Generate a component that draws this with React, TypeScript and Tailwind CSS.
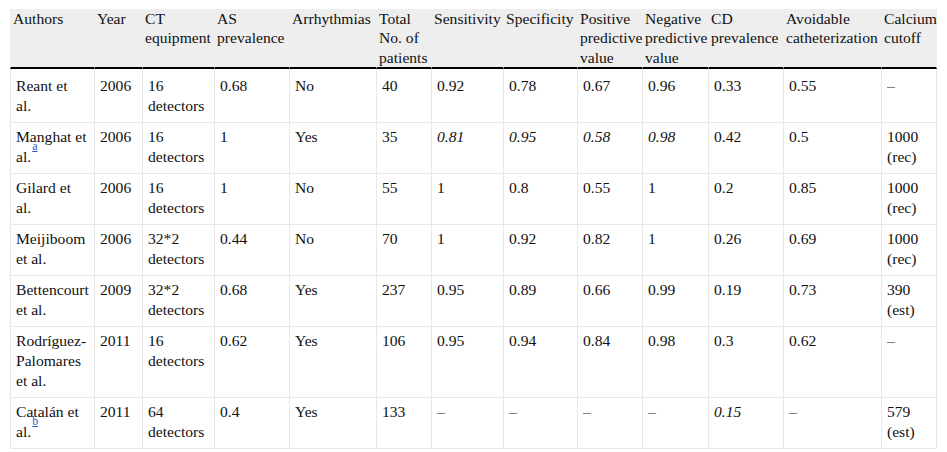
import React from "react";

type Cell = { v: React.ReactNode; i?: boolean };

const widths = [
  "w-[84px]",
  "w-[48px]",
  "w-[72px]",
  "w-[75px]",
  "w-[87px]",
  "w-[55px]",
  "w-[72px]",
  "w-[74px]",
  "w-[65px]",
  "w-[66px]",
  "w-[75px]",
  "w-[98px]",
  "w-[56px]",
];

const headers = [
  "Authors",
  "Year",
  "CT equipment",
  "AS prevalence",
  "Arrhythmias",
  "Total No. of patients",
  "Sensitivity",
  "Specificity",
  "Positive predictive value",
  "Negative predictive value",
  "CD prevalence",
  "Avoidable catheterization",
  "Calcium cutoff",
];

const Sup = ({ c }: { c: string }) => (
  <sup className="ml-[1px] text-[12px] text-[#2b5cc4] underline align-[6px] leading-[0]">{c}</sup>
);

const Lines = ({ l }: { l: React.ReactNode[] }) => (
  <>
    {l.map((x, i) => (
      <span key={i} className="block whitespace-nowrap">
        {x}
      </span>
    ))}
  </>
);

const rows: Cell[][] = [
  [
    { v: <Lines l={["Reant et", "al."]} /> },
    ...["2006", "16 detectors", "0.68", "No", "40", "0.92", "0.78", "0.67", "0.96", "0.33", "0.55", "–"].map((v) => ({ v })),
  ],
  [
    { v: <Lines l={["Manghat et", <>al.<Sup c="a" /></>]} /> },
    { v: "2006" },
    { v: "16 detectors" },
    { v: "1" },
    { v: "Yes" },
    { v: "35" },
    { v: "0.81", i: true },
    { v: "0.95", i: true },
    { v: "0.58", i: true },
    { v: "0.98", i: true },
    { v: "0.42" },
    { v: "0.5" },
    { v: "1000 (rec)" },
  ],
  [
    { v: <Lines l={["Gilard et", "al."]} /> },
    ...["2006", "16 detectors", "1", "No", "55", "1", "0.8", "0.55", "1", "0.2", "0.85", "1000 (rec)"].map((v) => ({ v })),
  ],
  [
    { v: <Lines l={["Meijiboom", "et al."]} /> },
    ...["2006", "32*2 detectors", "0.44", "No", "70", "1", "0.92", "0.82", "1", "0.26", "0.69", "1000 (rec)"].map((v) => ({ v })),
  ],
  [
    { v: <Lines l={["Bettencourt", "et al."]} /> },
    ...["2009", "32*2 detectors", "0.68", "Yes", "237", "0.95", "0.89", "0.66", "0.99", "0.19", "0.73", "390 (est)"].map((v) => ({ v })),
  ],
  [
    { v: <Lines l={["Rodríguez-", "Palomares", "et al."]} /> },
    ...["2011", "16 detectors", "0.62", "Yes", "106", "0.95", "0.94", "0.84", "0.98", "0.3", "0.62", "–"].map((v) => ({ v })),
  ],
  [
    { v: <Lines l={["Catalán et", <>al.<Sup c="b" /></>]} /> },
    { v: "2011" },
    { v: "64 detectors" },
    { v: "0.4" },
    { v: "Yes" },
    { v: "133" },
    { v: "–" },
    { v: "–" },
    { v: "–" },
    { v: "–" },
    { v: "0.15", i: true },
    { v: "–" },
    { v: "579 (est)" },
  ],
];

export default function App() {
  return (
    <div className="w-[947px] h-[452px] bg-white pl-[10px] pt-[9px] overflow-hidden [font-family:'Liberation_Serif','Times_New_Roman',serif]">
      <table className="table-fixed w-[927px] border-separate border-spacing-0 text-[15.6px] leading-[20px] text-[#111] [font-family:'Liberation_Serif','Times_New_Roman',serif]">
        <colgroup>
          {widths.map((w, i) => (
            <col key={i} className={w} />
          ))}
        </colgroup>
        <thead>
          <tr>
            {headers.map((h, i) => (
              <th
                key={i}
                className={`[font-family:'Liberation_Serif','Times_New_Roman',serif] text-[15.6px] bg-[#eeeeee] font-normal text-left align-top pl-[2px] pr-0 pt-0 pb-0 leading-[19.3px] border-b-2 border-b-black border-l border-l-[#eeeeee] ${i === headers.length - 1 ? "border-r border-r-[#eeeeee]" : ""}`}
              >
                {h}
              </th>
            ))}
          </tr>
        </thead>
        <tbody>
          {rows.map((r, ri) => (
            <tr key={ri}>
              {r.map((c, ci) => (
                <td
                  key={ci}
                  className={`[font-family:'Liberation_Serif','Times_New_Roman',serif] text-[15.6px] align-top pl-[5px] pr-[4px] ${ri === 0 ? "pt-[7px]" : "pt-[4px]"} pb-[6px] border-b border-l border-[#e8e8e8] ${ci === r.length - 1 ? "border-r" : ""} ${c.i ? "italic" : ""}`}
                >
                  {c.v}
                </td>
              ))}
            </tr>
          ))}
        </tbody>
      </table>
    </div>
  );
}
